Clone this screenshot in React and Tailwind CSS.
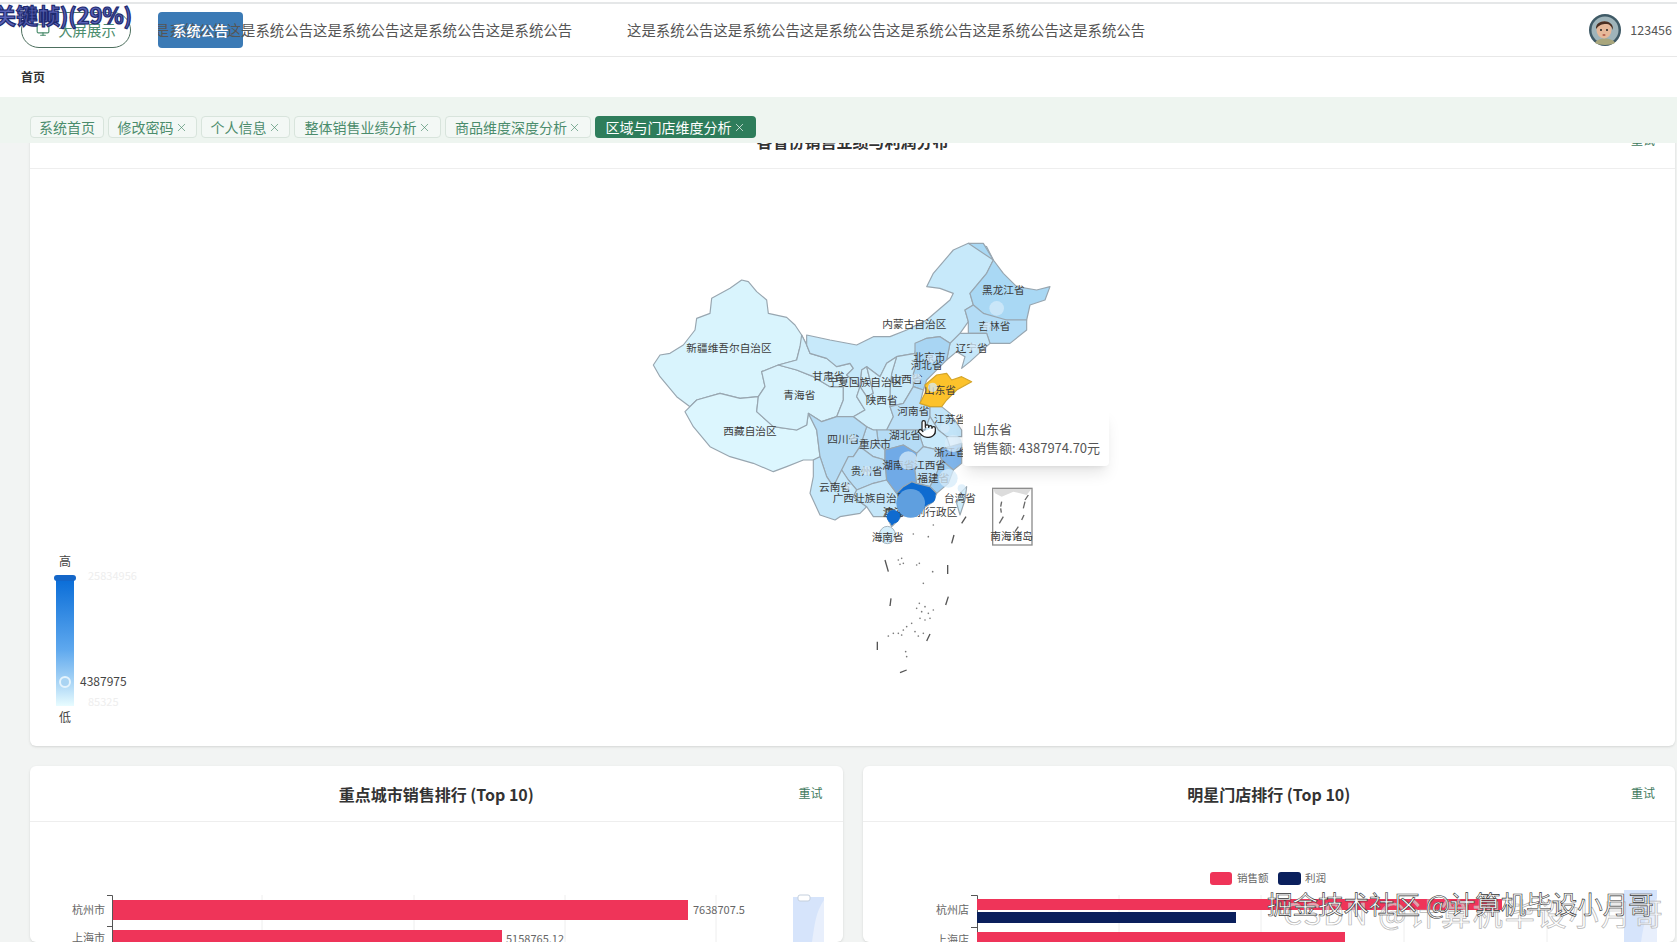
import React from "react";
import { Monitor, Pointer, X } from "lucide-react";

const tabs = [
  { label: "系统首页", w: "w-[74px]" },
  { label: "修改密码", w: "w-[89px]", close: true },
  { label: "个人信息", w: "w-[89px]", close: true },
  { label: "整体销售业绩分析", w: "w-[147px]", close: true },
  { label: "商品维度深度分析", w: "w-[146px]", close: true },
  { label: "区域与门店维度分析", w: "w-[161px]", close: true, active: true },
];

const notice = "这是系统公告这是系统公告这是系统公告这是系统公告这是系统公告这是系统公告";

const provinces = [
  { n: "xj", c: "#d9f4fd", p: "40,405 60,375 90,370 130,345 165,300 170,265 210,250 215,205 270,175 305,150 325,155 350,185 380,210 385,250 440,262 465,285 485,315 500,345 480,350 470,390 415,405 365,425 375,470 355,500 300,505 240,490 170,510 150,530 110,500 85,470 60,440" },
  { n: "xz", c: "#dcf6fe", p: "150,530 170,510 240,490 300,505 355,500 350,545 400,590 470,600 500,585 505,550 530,600 540,680 520,690 490,690 440,710 400,725 340,700 270,680 210,650 160,590 135,545" },
  { n: "qh", c: "#d8f3fd", p: "365,425 415,405 470,420 520,440 570,470 610,470 610,510 590,560 545,575 505,550 500,585 470,600 400,590 350,545 355,500 375,470" },
  { n: "gs", c: "#d3f0fc", p: "485,315 500,345 510,370 560,385 590,410 630,400 640,415 620,435 660,470 650,500 675,540 640,560 590,560 610,510 610,470 570,470 520,440 470,420 415,405 470,390 480,350" },
  { n: "nm", c: "#c7e9fa", p: "500,315 570,330 650,345 700,320 750,320 800,300 860,270 930,210 940,190 900,175 860,170 880,130 940,60 985,40 1040,50 1060,90 1040,130 990,190 1000,225 975,240 985,275 960,310 930,340 900,320 860,325 830,340 825,370 770,380 740,400 720,440 680,410 665,420 660,470 620,435 640,415 630,400 590,410 560,385 510,370 500,345" },
  { n: "hlj", c: "#a9d8f4", p: "985,40 1030,40 1060,90 1090,130 1130,170 1190,180 1230,170 1215,210 1170,225 1160,270 1100,270 1060,265 1030,250 1000,225 990,190 1040,130 1060,90" },
  { n: "jl", c: "#b3dcf6", p: "975,240 1000,225 1030,250 1100,270 1160,270 1160,300 1110,340 1050,340 1040,310 985,310 985,275" },
  { n: "ln", c: "#c6e7f9", p: "930,340 960,310 985,310 1040,310 1050,340 990,395 965,415 975,380 950,365 920,390" },
  { n: "hb", c: "#a8d5f3", p: "825,340 860,325 900,320 930,340 920,390 900,410 880,430 860,450 850,480 820,470 820,430 830,400 825,370" },
  { n: "sx", c: "#cbebfa", p: "770,380 825,370 830,400 820,430 820,470 790,520 750,530 750,480 755,430" },
  { n: "nx", c: "#d3f0fc", p: "665,420 680,410 690,450 700,490 680,500 660,470" },
  { n: "sn", c: "#d3f0fc", p: "680,410 720,440 740,400 770,380 755,430 750,480 750,530 760,560 740,600 700,600 680,590 640,560 675,540 650,500 660,470 680,500 700,490 690,450" },
  { n: "hn", c: "#bce0f7", p: "750,530 790,520 820,470 850,480 840,520 870,530 870,560 855,600 800,600 740,600 760,560" },
  { n: "js", c: "#c2e4f8", p: "870,530 905,530 930,550 965,600 965,620 920,620 895,600 870,560" },
  { n: "ah", c: "#c9e9fa", p: "870,560 895,600 920,620 930,650 895,660 850,650 840,620 855,600" },
  { n: "hub", c: "#b5dcf6", p: "740,600 800,600 855,600 840,620 850,650 830,670 790,645 735,660 715,640 710,600" },
  { n: "cq", c: "#bfe2f8", p: "680,590 700,600 710,600 715,640 735,660 735,690 700,680 660,650" },
  { n: "sc", c: "#b5dcf5", p: "505,550 545,575 590,560 640,560 680,590 660,650 640,680 625,680 605,720 580,770 560,740 540,680 530,600" },
  { n: "gz", c: "#b9def6", p: "640,680 660,650 700,680 735,690 740,750 700,760 650,780 625,750 605,720 625,680" },
  { n: "yn", c: "#c6e8fa", p: "540,680 560,740 580,770 605,720 625,750 650,780 640,800 680,830 660,850 600,860 585,870 540,855 510,790 520,740 520,690" },
  { n: "gx", c: "#c4e6f9", p: "650,780 700,760 740,750 770,790 790,790 790,830 760,860 740,860 700,860 680,830 640,800" },
  { n: "hun", c: "#70aae7", p: "735,660 790,645 830,670 825,720 830,760 790,770 770,790 740,750 735,690" },
  { n: "jx", c: "#bee0f7", p: "830,670 850,650 895,660 905,690 890,730 870,770 830,760 825,720" },
  { n: "zj", c: "#7fb4ea", p: "895,660 930,650 965,640 965,700 940,720 905,690" },
  { n: "fj", c: "#9fcdf1", p: "905,690 940,720 925,760 890,790 870,770 890,730" },
  { n: "gd", c: "#0f6bd0", p: "790,770 815,755 830,760 870,770 890,790 880,815 850,835 800,840 775,870 755,890 740,860 760,860 790,830 770,790" },
  { n: "tw", c: "#cdebfa", p: "980,770 975,810 960,855 950,820 960,790" },
];

const labels = [
  ["新疆维吾尔自治区", 267, 353],
  ["内蒙古自治区", 823, 280],
  ["黑龙江省", 1090, 180],
  ["吉林省", 1063, 288],
  ["辽宁省", 995, 352],
  ["北京市", 868, 380],
  ["河北省", 860, 403],
  ["甘肃省", 565, 438],
  ["宁夏回族自治区", 675, 455],
  ["山西省", 800, 445],
  ["山东省", 900, 478],
  ["陕西省", 725, 508],
  ["青海省", 478, 493],
  ["河南省", 820, 542],
  ["江苏省", 930, 565],
  ["西藏自治区", 330, 603],
  ["四川省", 610, 625],
  ["重庆市", 705, 640],
  ["湖北省", 795, 615],
  ["浙江省", 930, 665],
  ["湖南省", 775, 705],
  ["江西省", 870, 703],
  ["贵州省", 680, 722],
  ["福建省", 880, 742],
  ["云南省", 585, 770],
  ["广西壮族自治区", 690, 802],
  ["广东省", 780, 845],
  ["澳门特别行政区", 840, 845],
  ["台湾省", 960, 802],
  ["海南省", 743, 920],
  ["南海诸岛", 1115, 918],
];

// scatter markers lie over the labels and hide parts of them
const ripples = [
  [1070, 235, 22],
  [1042, 288, 13],
  [1000, 350, 12],
  [878, 472, 14],
  [875, 385, 14],
  [830, 445, 14],
  [640, 625, 10],
  [805, 692, 28],
  [680, 722, 14],
  [925, 745, 28],
  [940, 640, 26],
  [915, 595, 14],
  [625, 770, 9],
  [965, 775, 12],
];

const dashes = [
  [735, 990, 745, 1025],
  [923, 1005, 923, 1032],
  [935, 940, 942, 915],
  [965, 880, 978, 860],
  [753, 1105, 750, 1128],
  [917, 1125, 925, 1100],
  [712, 1235, 712, 1260],
  [860, 1233, 870, 1212],
  [780, 1328, 800, 1320],
];

const dots = [
  [775, 990], [785, 985], [790, 1000], [780, 1003], [830, 1005], [838, 1000], [878, 1025], [850, 1060],
  [838, 1120], [830, 1135], [845, 1145], [855, 1130], [865, 1150], [880, 1140], [870, 1165], [855, 1170],
  [840, 1165], [815, 1180], [800, 1190], [790, 1200], [775, 1210], [745, 1218], [760, 1210], [785, 1215],
  [825, 1205], [835, 1218], [850, 1210], [797, 1265], [800, 1280], [865, 920], [880, 885], [820, 912],
];

function MapChart() {
  return (
    <svg className="block w-full h-[577px]" viewBox="0 0 1645 577">
      <defs>
        <linearGradient id="legend" x1="0" y1="0" x2="0" y2="1">
          <stop offset="0" stopColor="#0b6ed8" />
          <stop offset="0.55" stopColor="#5ea8ee" />
          <stop offset="0.85" stopColor="#b5dcf7" />
          <stop offset="1" stopColor="#e8fcff" />
        </linearGradient>
      </defs>

      {/* visual map legend */}
      <g fontSize="12" fill="#444" textAnchor="middle">
        <text x="35" y="397">高</text>
        <text x="35" y="553">低</text>
      </g>
      <rect x="26" y="411" width="18" height="126" fill="url(#legend)" />
      <rect x="24" y="406" width="22" height="6" rx="3" fill="#1466c8" />
      <circle cx="35" cy="513" r="5" fill="#a9d4f3" stroke="#e4f3fc" strokeWidth="2" />
      <text x="50" y="517" fontSize="12" fill="#444">4387975</text>
      <text x="58" y="411" fontSize="11" fill="#eeeeee">25834956</text>
      <text x="58" y="537" fontSize="11" fill="#eeeeee">85325</text>

      {/* china map, points taken at 3x */}
      <g transform="translate(610 61) scale(0.33333)">
        {provinces.map((prov) => (
          <polygon key={prov.n} points={prov.p} fill={prov.c} stroke="#98a6b0" strokeWidth="3.5" strokeLinejoin="round" />
        ))}
        <polygon
          points="840,520 860,480 855,465 890,435 920,430 935,450 965,440 995,455 950,480 920,510 905,530 870,530"
          fill="#fcc22b"
          stroke="#d4a52a"
          strokeWidth="3.5"
          strokeLinejoin="round"
        />
        <ellipse cx="742" cy="915" rx="24" ry="26" fill="#d5eefb" stroke="#a5b5bf" strokeWidth="3" />

        {/* south china sea box */}
        <rect x="1058" y="775" width="118" height="170" fill="#fff" stroke="#8c8c8c" strokeWidth="4" />
        <polygon points="1060,777 1174,777 1160,795 1120,785 1085,800 1065,790" fill="#dcdcdc" />
        <g stroke="#666" strokeWidth="4">
          <line x1="1085" y1="815" x2="1082" y2="830" />
          <line x1="1082" y1="835" x2="1084" y2="848" />
          <line x1="1090" y1="860" x2="1078" y2="880" />
          <line x1="1155" y1="815" x2="1150" y2="835" />
          <line x1="1152" y1="855" x2="1145" y2="870" />
          <line x1="1135" y1="890" x2="1125" y2="905" />
          <line x1="1165" y1="795" x2="1155" y2="810" />
        </g>

        {dashes.map(([x1, y1, x2, y2], i) => (
          <line key={i} x1={x1} y1={y1} x2={x2} y2={y2} stroke="#555" strokeWidth="4" />
        ))}
        {dots.map(([x, y], i) => (
          <circle key={i} cx={x} cy={y} r="2.5" fill="#777" />
        ))}

        <g fontSize="32" fill="#3c3c3c" textAnchor="middle" dominantBaseline="central">
          {labels.map(([t, x, y]) => (
            <text key={t} x={x} y={y}>{t}</text>
          ))}
        </g>

        {ripples.map(([x, y, r], i) => (
          <circle key={i} cx={x} cy={y} r={r} fill="#d6ebfa" fillOpacity="0.75" />
        ))}
        <circle cx="760" cy="860" r="20" fill="#0f6bd0" />
        <circle cx="865" cy="800" r="22" fill="#0f6bd0" />
        <circle cx="812" cy="820" r="43" fill="#5f9fdf" />
      </g>
    </svg>
  );
}

function CityChart() {
  return (
    <svg className="block" width="813" height="120" viewBox="0 0 813 120">
      <g stroke="#eeeeee">
        <line x1="232" y1="73" x2="232" y2="120" />
        <line x1="384" y1="73" x2="384" y2="120" />
        <line x1="535" y1="73" x2="535" y2="120" />
        <line x1="686" y1="73" x2="686" y2="120" />
      </g>
      <path d="M77 73.5H82.5V120M77 104.5H82" stroke="#555" fill="none" />
      <rect x="83" y="78" width="575" height="20" fill="#ef3459" />
      <rect x="83" y="108" width="389" height="20" fill="#ef3459" />
      <g fontSize="11" fill="#666">
        <text x="75" y="92" textAnchor="end">杭州市</text>
        <text x="75" y="120" textAnchor="end">上海市</text>
        <text x="663" y="92">7638707.5</text>
        <text x="476" y="121">5158765.12</text>
      </g>
      <rect x="763" y="75" width="31" height="45" fill="#d6e4fb" />
      <path d="M782 120C785 100 786 90 794 78V120Z" fill="#e8effc" />
      <rect x="768" y="73" width="12" height="6" rx="2" fill="#ffffff" stroke="#c4cfdd" />
    </svg>
  );
}

function StoreChart() {
  return (
    <svg className="block" width="813" height="120" viewBox="0 0 813 120">
      <g stroke="#eeeeee">
        <line x1="256" y1="73" x2="256" y2="120" />
        <line x1="398" y1="73" x2="398" y2="120" />
        <line x1="541" y1="73" x2="541" y2="120" />
        <line x1="684" y1="73" x2="684" y2="120" />
      </g>
      <rect x="347" y="50" width="22" height="13" rx="3" fill="#ef3459" />
      <rect x="415" y="50" width="23" height="13" rx="3" fill="#0a1f5c" />
      <g fontSize="10.5" fill="#666">
        <text x="374" y="60">销售额</text>
        <text x="442" y="60">利润</text>
        <text x="106" y="92" textAnchor="end" fontSize="11">杭州店</text>
        <text x="106" y="122" textAnchor="end" fontSize="11">上海店</text>
      </g>
      <path d="M108 73.5H114.5V120M108 105.5H114" stroke="#555" fill="none" />
      <rect x="114" y="77" width="525" height="11" fill="#ef3459" />
      <rect x="114" y="90" width="259" height="11" fill="#0a1f5c" />
      <rect x="114" y="110" width="368" height="11" fill="#ef3459" />
      <rect x="761" y="68" width="33" height="52" fill="#d6e4fb" />
      <path d="M778 120C781 100 784 88 794 76V120Z" fill="#e8effc" />
    </svg>
  );
}

function CardHead({ title }) {
  return (
    <div className="relative h-14 flex items-center justify-center border-b border-[#eeeeee]">
      <h3 className="text-base font-bold text-[#333333]">{title}</h3>
      <span className="absolute right-[20px] top-[19px] text-xs text-[#3f7a5e]">重试</span>
    </div>
  );
}

export default function App() {
  return (
    <div
      className="relative w-full h-screen overflow-hidden flex flex-col bg-white"
      style={{ fontFamily: '"Noto Sans CJK SC", "Noto Sans", sans-serif' }}
    >
      {/* header */}
      <div className="shrink-0 h-[54px] mt-[2px] border-t-2 border-[#e5e7e8] flex items-center">
        <div className="ml-[21px] w-[110px] h-9 shrink-0 rounded-full border border-[#4d6f5e] flex items-center justify-center gap-2 text-[14.4px] text-[#4b8c6c]">
          <Monitor size={14} />
          大屏展示
        </div>
        <div className="relative ml-[27px] w-[1000px] h-9 flex items-center overflow-hidden">
          {/* the scrolling text runs over the badge, its label sits on top */}
          <div className="absolute left-0 top-0 w-[85px] h-9 rounded-sm bg-[#3b7ab5]" />
          <div className="relative flex shrink-0 gap-[55px] ml-[-104px] text-[14.4px] text-[#555555] whitespace-nowrap">
            <span>{notice}</span>
            <span>{notice}</span>
          </div>
          <div className="absolute left-0 top-0 w-[85px] h-9 flex items-center justify-center text-sm font-medium text-white">
            系统公告
          </div>
        </div>
        <div className="ml-auto flex items-center gap-[9px] pr-[5px]">
          <svg width="32" height="32" viewBox="0 0 32 32">
            <circle cx="16" cy="16" r="16" fill="#3f5a66" />
            <circle cx="16" cy="16" r="13.5" fill="#9fb4ba" />
            <path d="M6 29C8 23 24 23 26 29C22 31.5 10 31.5 6 29Z" fill="#a9a67c" />
            <ellipse cx="15" cy="16" rx="7.5" ry="8.5" fill="#e6b899" />
            <path d="M7 15C6 5 25 4 24 16C22 11 20 10 17 10C13 10 10 11 7 15Z" fill="#4a2f22" />
            <circle cx="12" cy="16" r="1" fill="#222" />
            <circle cx="18" cy="16" r="1" fill="#222" />
            <ellipse cx="15" cy="21" rx="1.6" ry="1" fill="#b5604f" />
          </svg>
          <span className="text-[12.5px] text-[#555555]">123456</span>
        </div>
      </div>

      {/* breadcrumb */}
      <div className="shrink-0 h-[41px] border-t border-[#e8e8e8] pl-[21px] flex items-center text-xs font-bold text-[#333333]">
        首页
      </div>

      {/* tabs */}
      <div className="relative z-10 shrink-0 h-[46px] bg-[#eef5f0] pt-[19px] pl-[30px] flex items-start gap-1">
        {tabs.map((t) => (
          <div
            key={t.label}
            className={
              t.active
                ? `${t.w} h-[22px] rounded-sm bg-[#2e7d5b] text-white text-sm flex items-center justify-center gap-px`
                : `${t.w} h-[22px] rounded-sm border border-[#d8e4dc] bg-[#f3f8f5] text-[#4b8c6c] text-sm flex items-center justify-center gap-px`
            }
          >
            <span>{t.label}</span>
            {t.close && <X size={13} strokeWidth={1.25} />}
          </div>
        ))}
      </div>

      {/* main content scrolled under the tabs */}
      <div className="relative flex-1 overflow-hidden bg-[#f2f4f3] pl-[30px] pr-[2px]">
        <div className="mt-[-30px] bg-white rounded-md shadow-sm">
          <CardHead title="各省份销售业绩与利润分布" />
          <MapChart />
        </div>
        <div className="grid grid-cols-2 gap-5 mt-5">
          <div className="bg-white rounded-md shadow-sm">
            <CardHead title="重点城市销售排行 (Top 10)" />
            <CityChart />
          </div>
          <div className="bg-white rounded-md shadow-sm">
            <CardHead title="明星门店排行 (Top 10)" />
            <StoreChart />
          </div>
        </div>
      </div>

      {/* map tooltip and cursor */}
      <div className="absolute left-[963px] top-[409px] w-[146px] h-[57px] rounded bg-white shadow-lg pl-[10px] flex flex-col justify-center text-[13px] leading-[19px] text-[#555555]">
        <div>山东省</div>
        <div className="whitespace-nowrap">销售额: 4387974.70元</div>
      </div>
      <Pointer className="absolute left-[917px] top-[419px]" size={20} fill="#ffffff" color="#222222" strokeWidth={1.5} />

      {/* video overlays */}
      <div className="absolute left-[-6px] top-[-2px] text-[22px] font-bold whitespace-nowrap text-[#5a63b8] [-webkit-text-stroke:1.2px_#1d2a70] [text-shadow:0_0_2px_#c7cdf0]">
        关键帧)(29%)
      </div>
      <div className="absolute left-[1283px] top-[897px] text-[30px] leading-none tracking-[2px] whitespace-nowrap text-white/50 [-webkit-text-stroke:0.7px_#b5b5b5]">
        CSDN @计算机毕设小月哥
      </div>
      <div className="absolute left-[1267px] top-[890px] text-[25.5px] leading-none whitespace-nowrap text-white [-webkit-text-stroke:0.6px_#333333]">
        掘金技术社区 @计算机毕设小月哥
      </div>
    </div>
  );
}
